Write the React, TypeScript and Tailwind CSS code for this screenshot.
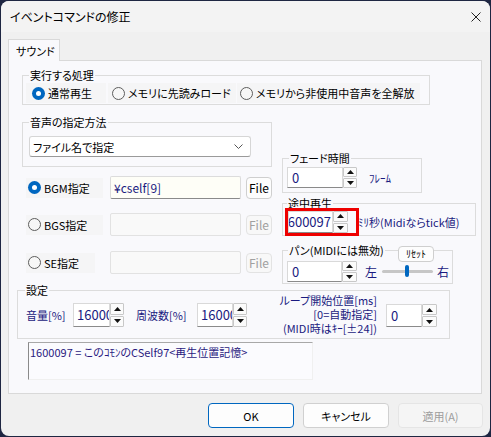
import React from "react";

function Tri({ up }: { up?: boolean }) {
  return (
    <svg width="7" height="4" viewBox="0 0 7 4" className="block">
      <path d={up ? "M0 4L3.5 0L7 4Z" : "M0 0L3.5 4L7 0Z"} fill="#111" />
    </svg>
  );
}

function SpinBtns({ cls }: { cls: string }) {
  return (
    <div className={"flex flex-col gap-px " + cls}>
      <div className="flex-1 flex items-center justify-center border border-[#c8c8c8] bg-[#fbfbfb] rounded-[1px]">
        <Tri up />
      </div>
      <div className="flex-1 flex items-center justify-center border border-[#c8c8c8] bg-[#fbfbfb] rounded-[1px]">
        <Tri />
      </div>
    </div>
  );
}

function Spin({
  cls,
  fieldCls,
  btnCls,
  children,
}: {
  cls: string;
  fieldCls: string;
  btnCls: string;
  children: React.ReactNode;
}) {
  return (
    <div className={"flex " + cls}>
      <div
        className={
          "flex items-center overflow-hidden whitespace-nowrap bg-white border border-[#d9d9d9] border-b-[#8a8a8a] text-[#1a1a80] text-[13px] " +
          fieldCls
        }
      >
        {children}
      </div>
      <SpinBtns cls={btnCls} />
    </div>
  );
}

function Radio({ on }: { on?: boolean }) {
  return on ? (
    <span className="w-[13px] h-[13px] rounded-full bg-[#0067c0] flex items-center justify-center shrink-0">
      <span className="w-[5px] h-[5px] rounded-full bg-white" />
    </span>
  ) : (
    <span className="w-[13px] h-[13px] rounded-full border border-[#5d5d5d] bg-[#f7f7f7] shrink-0" />
  );
}

function Group({
  label,
  cls,
  labelCls,
  children,
}: {
  label: string;
  cls: string;
  labelCls: string;
  children?: React.ReactNode;
}) {
  return (
    <div className={"relative border border-[#dcdcdc] " + cls}>
      <span
        className={
          "absolute top-[-7px] px-px bg-[#f9f9fc] leading-[12px] whitespace-nowrap " +
          labelCls
        }
      >
        {label}
      </span>
      {children}
    </div>
  );
}

function FileRow({
  label,
  on,
  rectCls,
  rowCls,
  enabled,
  value,
}: {
  label: string;
  on?: boolean;
  rectCls: string;
  rowCls: string;
  enabled?: boolean;
  value?: string;
}) {
  return (
    <div className={"flex items-center h-[23px] " + rowCls}>
      <div className="w-[81px] shrink-0 pl-[4px]">
        <div className={"flex items-center h-[20px] pl-[2px] bg-[#f5f5f6] " + rectCls}>
          <Radio on={on} />
          <span className="ml-[3px] whitespace-nowrap">{label}</span>
        </div>
      </div>
      {enabled ? (
        <div className="ml-[7px] w-[131px] h-[23px] bg-[#fefef7] border border-[#dcdcdc] border-b-[#8a8a8a] rounded-[2px] flex items-center pl-[3px] text-[#1a1a80] text-[12px]">
          {value}
        </div>
      ) : (
        <div className="ml-[7px] w-[131px] h-[23px] bg-[#f9f9f9] border border-[#e2e2e2] rounded-[2px]" />
      )}
      {enabled ? (
        <div className="ml-[5px] w-[26px] h-[22px] rounded-[4px] border border-[#cfcfcf] bg-[#fdfdfd] flex items-center justify-center text-[12px]">
          File
        </div>
      ) : (
        <div className="ml-[5px] w-[26px] h-[20px] rounded-[4px] border border-[#e3e3e3] bg-[#f8f8f8] flex items-center justify-center text-[#a0a0a0] text-[12px]">
          File
        </div>
      )}
    </div>
  );
}

export default function App() {
  return (
    <div className="w-[491px] h-[437px] bg-[#1e2642] pt-px pl-px font-['Noto_Sans_CJK_JP',sans-serif] text-[11px] leading-[16px] text-black [font-feature-settings:'palt']">
      <div className="w-[489px] h-[435px] rounded-[8px] bg-[#f0f0f0] overflow-hidden flex flex-col">
        {/* title bar */}
        <div className="h-[31px] shrink-0 bg-[#f3f3f3] flex items-center justify-between pl-[9px] pr-[9px]">
          <span className="text-[12px]">イベントコマンドの修正</span>
          <svg width="10" height="10" viewBox="0 0 10 10">
            <path d="M0.5 0.5L9.5 9.5M9.5 0.5L0.5 9.5" stroke="#222" strokeWidth="1" />
          </svg>
        </div>

        {/* tab */}
        <div className="mt-[7px] ml-[7px] flex">
          <div className="relative z-10 -mb-px w-[52px] h-[22px] border border-b-0 border-[#d9d9d9] bg-[#f9f9fc] flex items-center pl-[7px]">
            サウンド
          </div>
        </div>

        {/* panel */}
        <div className="ml-[7px] w-[474px] h-[334px] shrink-0 border border-[#d9d9d9] bg-[#f9f9fc] flex flex-col">
          {/* 実行する処理 */}
          <Group label="実行する処理" cls="mt-[14px] ml-[13px] w-[408px] h-[30px]" labelCls="left-[6px]">
            <div className="flex mt-[7px] ml-[3px] h-[20px]">
              <div className="w-[80px] h-[20px] pl-[6px] flex items-center bg-[#f5f5f6]">
                <Radio on />
                <span className="ml-[3px]">通常再生</span>
              </div>
              <div className="ml-[2px] w-[128px] h-[20px] pl-[4px] flex items-center bg-[#f5f5f6]">
                <Radio />
                <span className="ml-[3px] whitespace-nowrap">メモリに先読みロード</span>
              </div>
              <div className="ml-[1px] w-[183px] h-[20px] pl-[3px] flex items-center bg-[#f5f5f6]">
                <Radio />
                <span className="ml-[3px] whitespace-nowrap">メモリから非使用中音声を全解放</span>
              </div>
            </div>
          </Group>

          <div className="flex items-start">
            {/* left column */}
            <div className="ml-[13px] w-[250px] flex flex-col">
              <Group label="音声の指定方法" cls="mt-[17px] w-[250px] h-[45px]" labelCls="left-[6px]">
                <div className="mt-[13px] ml-[6px] w-[222px] h-[21px] bg-white border border-[#d6d6d6] border-b-[#9a9a9a] rounded-[3px] flex items-center justify-between pl-[3px] pr-[7px]">
                  <span>ファイル名で指定</span>
                  <svg width="9" height="5" viewBox="0 0 9 5">
                    <path d="M0.5 0.5L4.5 4.5L8.5 0.5" stroke="#555" fill="none" strokeWidth="1" />
                  </svg>
                </div>
              </Group>
              <FileRow label="BGM指定" on enabled value="¥cself[9]" rectCls="w-[77px]" rowCls="mt-[9px]" />
              <FileRow label="BGS指定" rectCls="w-[77px]" rowCls="mt-[14px]" />
              <FileRow label="SE指定" rectCls="w-[69px]" rowCls="mt-[15px]" />
            </div>

            {/* right column */}
            <div className="ml-[10px] flex flex-col">
              <Group label="フェード時間" cls="mt-[53px] w-[140px] h-[35px]" labelCls="left-[6px]">
                <div className="flex items-center mt-[8px] ml-[4px]">
                  <Spin cls="h-[21px]" fieldCls="w-[56px] h-[21px] pl-[4px]" btnCls="w-[14px] h-[21px]">
                    0
                  </Spin>
                  <span className="ml-[12px] text-[#1a1a80]">ﾌﾚｰﾑ</span>
                </div>
              </Group>
              <Group label="途中再生" cls="mt-[10px] w-[194px] h-[33px]" labelCls="left-[4px]">
                <div className="flex items-center mt-[7px] ml-[5px]">
                  <Spin cls="h-[22px]" fieldCls="w-[45px] h-[22px] justify-end pr-[1px]" btnCls="w-[15px] h-[22px]">
                    1600097
                  </Spin>
                  <span className="ml-[10px] text-[#1a1a80] whitespace-nowrap">ﾐﾘ秒(Midiならtick値)</span>
                </div>
                <div className="absolute left-[2px] top-[4px] w-[74px] h-[28px] border-[3px] border-[#ee0000]" />
              </Group>
              <Group label="パン(MIDIには無効)" cls="mt-[14px] w-[171px] h-[34px]" labelCls="left-[5px]">
                <div className="absolute left-[115px] top-[-5px] w-[36px] h-[16px] rounded-[4px] border border-[#cfcfcf] bg-[#fdfdfd] flex items-center justify-center text-[10px] leading-[12px]">
                  ﾘｾｯﾄ
                </div>
                <div className="flex items-center mt-[10px] ml-[4px]">
                  <Spin cls="h-[21px]" fieldCls="w-[55px] h-[21px] pl-[4px]" btnCls="w-[15px] h-[21px]">
                    0
                  </Spin>
                  <span className="ml-[8px] text-[#1a1a80] text-[12px]">左</span>
                  <div className="relative ml-[5px] w-[51px] h-[3px] rounded-full bg-[#c6c6c6]">
                    <div className="absolute left-[23px] top-[-5px] w-[4px] h-[12px] rounded-[2px] bg-[#0067c0]" />
                  </div>
                  <span className="ml-[4px] text-[#1a1a80] text-[12px]">右</span>
                </div>
              </Group>
            </div>
          </div>

          {/* 設定 */}
          <Group label="設定" cls="mt-[6px] ml-[8px] w-[433px] h-[49px]" labelCls="left-[7px]">
            <div className="flex items-start">
              <span className="ml-[8px] w-[47px] mt-[16px] text-[#1a1a80] whitespace-nowrap">音量[%]</span>
              <Spin cls="mt-[12px] h-[24px]" fieldCls="w-[37px] h-[24px] pl-[3px]" btnCls="w-[14px] h-[24px]">
                16000
              </Spin>
              <span className="ml-[12px] w-[61px] mt-[16px] text-[#1a1a80] whitespace-nowrap">周波数[%]</span>
              <Spin cls="mt-[12px] h-[24px]" fieldCls="w-[36px] h-[24px] pl-[3px]" btnCls="w-[14px] h-[24px]">
                16000
              </Spin>
              <div className="w-[130px] mt-[2px] text-right leading-[14px] text-[#1a1a80] whitespace-nowrap">
                <div>ループ開始位置[ms]</div>
                <div>[0=自動指定]</div>
                <div>(MIDI時はｷｰ[±24])</div>
              </div>
              <Spin cls="ml-[9px] mt-[13px] h-[23px]" fieldCls="w-[36px] h-[23px] pl-[4px]" btnCls="w-[15px] h-[23px]">
                0
              </Spin>
            </div>
          </Group>

          {/* memo */}
          <div className="mt-[3px] ml-[19px] w-[285px] h-[38px] bg-[#fbfbfe] border-t border-l border-t-[#a8a8a8] border-l-[#8a8a8a] border-r border-b border-r-[#f0f0f0] border-b-[#f0f0f0] pl-[1px] pt-px text-[#2a1a80] whitespace-nowrap">
            1600097 = このｺﾓﾝのCSelf97&lt;再生位置記憶&gt;
          </div>
        </div>

        {/* buttons */}
        <div className="mt-[9px] flex justify-end pr-[7px] gap-[9px]">
          <div className="w-[86px] h-[25px] rounded-[4px] border border-[#0067c0] bg-[#fdfdfd] flex items-center justify-center">
            OK
          </div>
          <div className="w-[86px] h-[25px] rounded-[4px] border border-[#d0d0d0] bg-[#fdfdfd] flex items-center justify-center">
            キャンセル
          </div>
          <div className="w-[85px] h-[25px] rounded-[4px] border border-[#e5e5e5] bg-[#f5f5f5] flex items-center justify-center text-[#9d9d9d]">
            適用(A)
          </div>
        </div>
      </div>
    </div>
  );
}
